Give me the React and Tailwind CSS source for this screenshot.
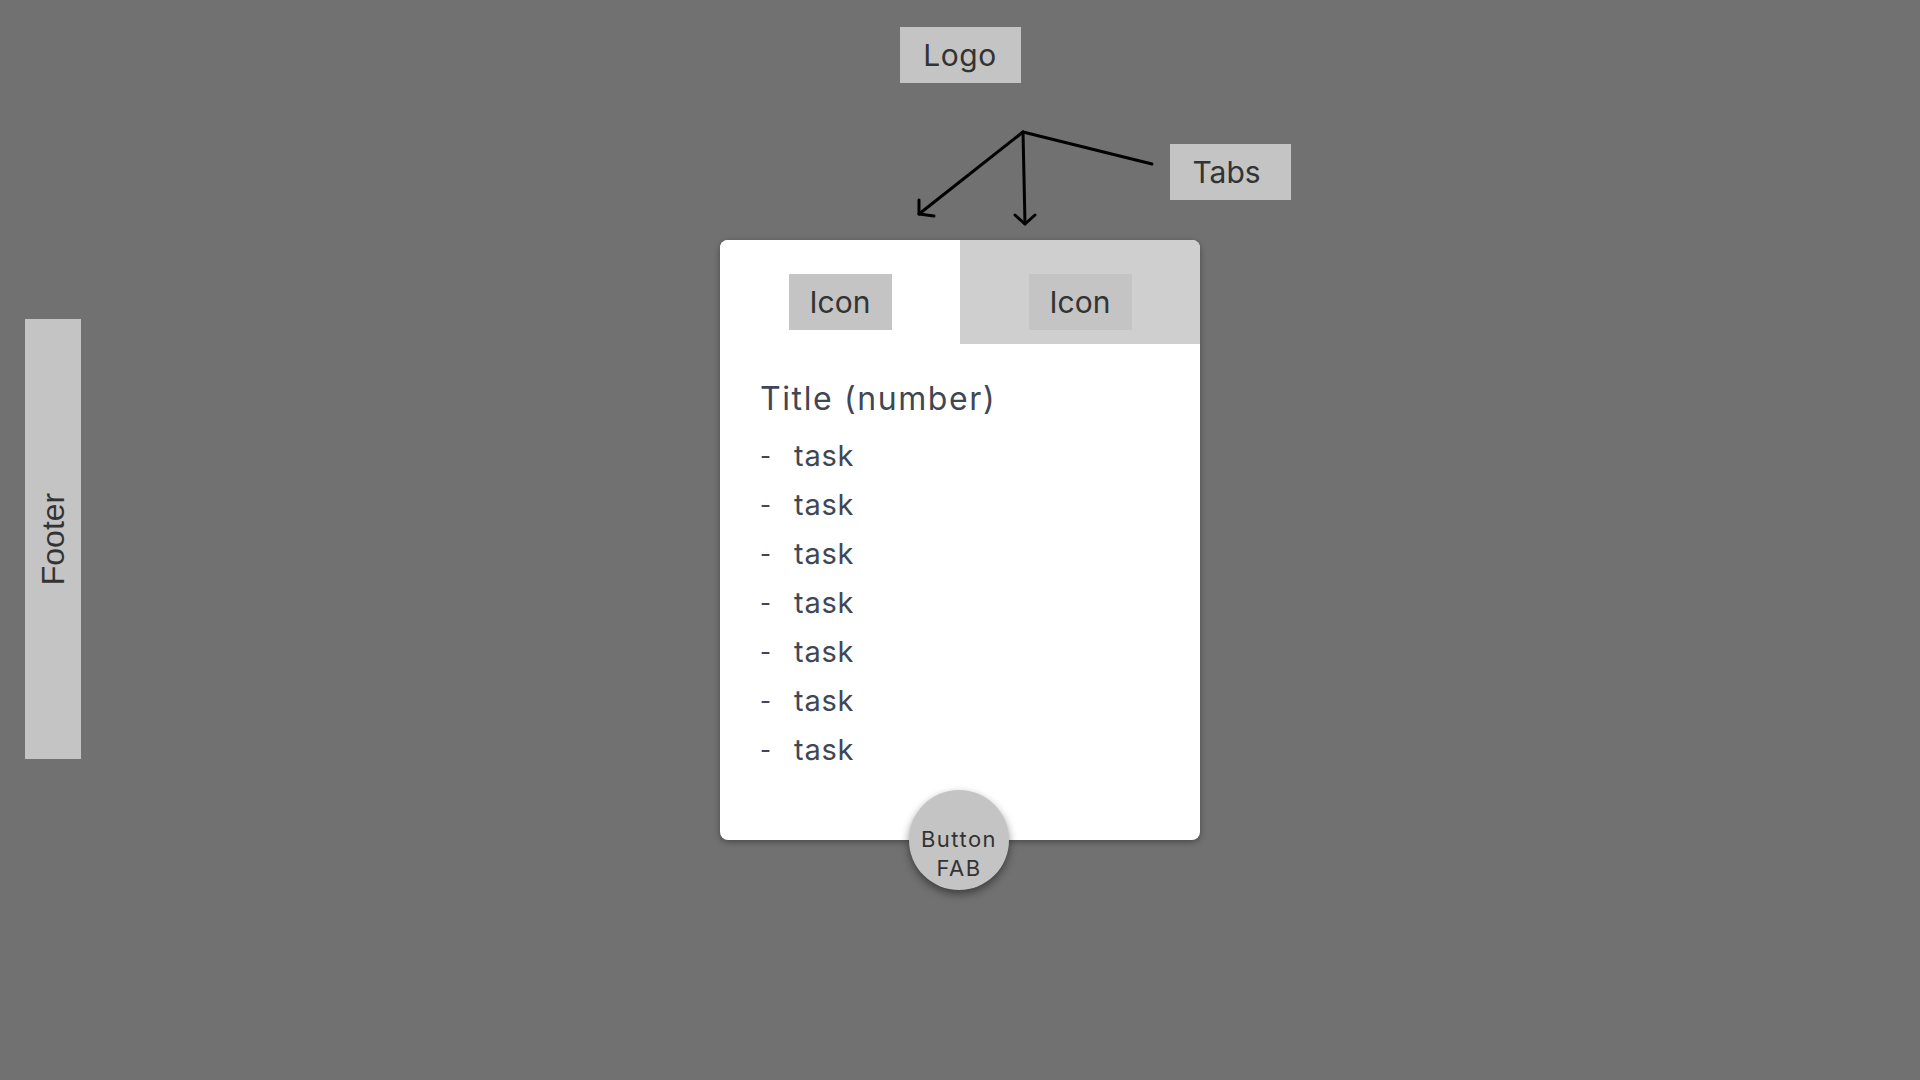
import React from 'react'

const TASKS = Array.from({ length: 7 }, () => 'task')

function Box({ children, className = '' }) {
  return (
    <div
      className={`flex items-center justify-center bg-[#c4c4c4] text-[30px] text-[#333] ${className}`}
    >
      {children}
    </div>
  )
}

function Arrows() {
  return (
    <svg
      className="absolute left-0 top-0 h-[157px] w-[480px] overflow-visible"
      viewBox="0 0 480 157"
      fill="none"
      aria-hidden
    >
      <g stroke="#000" strokeWidth="3" strokeLinecap="round" strokeLinejoin="round">
        <path d="M303 49L432 81" />
        <path d="M303 49L199 131" />
        <path d="M199 117L199 131L214 133" />
        <path d="M303 49L305 141" />
        <path d="M295 132L305 141L315 132" />
      </g>
    </svg>
  )
}

export default function App() {
  return (
    <div className="flex h-[1080px] w-full bg-[#717171] font-['Inter',sans-serif]">
      <aside className="ml-[25px] mt-[319px] flex h-[440px] w-[56px] items-center justify-center bg-[#c4c4c4]">
        <span className="-rotate-90 whitespace-nowrap font-['Liberation_Sans',sans-serif] text-[32px] text-[#333]">
          Footer
        </span>
      </aside>

      <main className="ml-[639px] flex w-[480px] flex-col pt-[27px]">
        <Box className="mx-auto h-[56px] w-[121px] tracking-[0.5px]">Logo</Box>

        <div className="relative h-[157px]">
          <Arrows />
          <Box className="absolute left-[450px] top-[61px] h-[56px] w-[121px] pr-[8px]">Tabs</Box>
        </div>

        <section className="relative h-[600px] rounded-lg bg-white shadow-[0_2px_6px_rgba(0,0,0,0.35)]">
          <div className="grid h-[104px] grid-cols-2">
            <div className="flex justify-center rounded-tl-lg bg-white pt-[34px]">
              <Box className="h-[56px] w-[103px]">Icon</Box>
            </div>
            <div className="flex justify-center rounded-tr-lg bg-[#cfcfcf] pt-[34px]">
              <Box className="h-[56px] w-[103px]">Icon</Box>
            </div>
          </div>

          <div className="pl-[40px] pt-[35px] text-[#3f4756]">
            <h2 className="text-[32px] font-normal leading-[40px] tracking-[1.6px]">Title (number)</h2>
            <ul className="mt-[12px]">
              {TASKS.map((t, i) => (
                <li key={i} className="flex text-[29px] leading-[49px]">
                  <span className="w-[34px] text-[24px]">-</span>
                  <span className="tracking-[0.8px]">{t}</span>
                </li>
              ))}
            </ul>
          </div>

          <button className="absolute bottom-[-50px] left-[189px] flex h-[100px] w-[100px] flex-col items-center justify-center rounded-full bg-[#c4c4c4] pt-[28px] text-[22px] leading-[29px] tracking-[1.5px] text-[#333] shadow-[0_4px_8px_rgba(0,0,0,0.45)]">
            <span>Button</span>
            <span>FAB</span>
          </button>
        </section>
      </main>
    </div>
  )
}
